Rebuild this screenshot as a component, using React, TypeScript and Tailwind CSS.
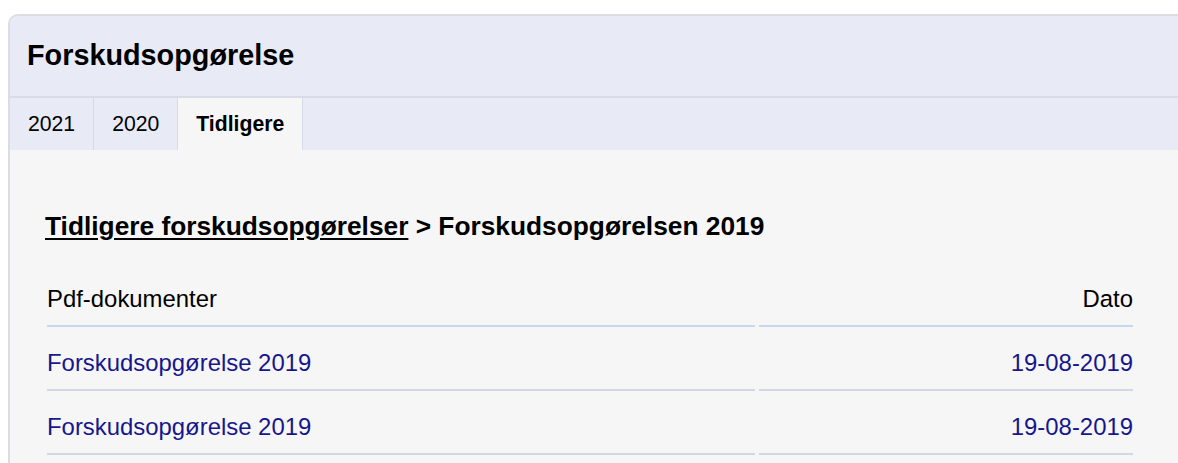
import React, { useState } from 'react';

const docs = [
  { name: 'Forskudsopgørelse 2019', date: '19-08-2019' },
  { name: 'Forskudsopgørelse 2019', date: '19-08-2019' },
];

const tabs = ['2021', '2020', 'Tidligere'];

const App: React.FC = () => {
  const [active, setActive] = useState('Tidligere');

  return (
    <div className="h-[463px] w-full overflow-hidden bg-white font-['Liberation_Sans',Arial,sans-serif] text-black">
      <div className="ml-[8px] mt-[14px] w-[1200px] rounded-tl-[10px] border-l-2 border-t-2 border-[#dcdde3] bg-[#f6f6f7]">
        <div className="flex h-[82px] items-center rounded-tl-[9px] border-b-2 border-[#d9dbe8] bg-[#e8eaf6] px-[17px]">
          <h1 className="text-[28.8px] font-bold">Forskudsopgørelse</h1>
        </div>

        <div className="flex h-[52px] bg-[#e8eaf6]">
          {tabs.map((t) => (
            <button
              key={t}
              onClick={() => setActive(t)}
              className={`flex items-center border-r border-[#d6d9e7] px-[18px] text-[21.2px] ${
                active === t ? 'bg-[#f6f6f7] font-bold' : 'bg-[#e8eaf6]'
              }`}
            >
              {t}
            </button>
          ))}
        </div>

        <div className="pl-[35px] pr-[64px] pt-[61px] pb-[40px]">
          <h2 className="text-[26.3px] font-bold leading-[30px]">
            <a href="#" className="underline underline-offset-[3px]">Tidligere forskudsopgørelser</a>
            {' > Forskudsopgørelsen 2019'}
          </h2>

          <div className="ml-[2px] mt-[22px] grid w-[1086px] grid-cols-[708px_1fr] gap-x-[4px] text-[23.9px]">
            <div className="flex h-[64px] items-center border-b-2 border-[#c9d7ee] pt-[9px]">Pdf-dokumenter</div>
            <div className="flex h-[64px] items-center justify-end border-b-2 border-[#c9d7ee] pt-[9px]">Dato</div>
            {docs.map((d, i) => (
              <React.Fragment key={i}>
                <div className="flex h-[64px] items-center border-b-2 border-[#d3d7e3] pt-[9px]">
                  <a href="#" className="text-[#16168c]">{d.name}</a>
                </div>
                <div className="flex h-[64px] items-center justify-end border-b-2 border-[#d3d7e3] pt-[9px] text-[#16168c]">
                  {d.date}
                </div>
              </React.Fragment>
            ))}
          </div>
        </div>
      </div>
    </div>
  );
};

export default App;
